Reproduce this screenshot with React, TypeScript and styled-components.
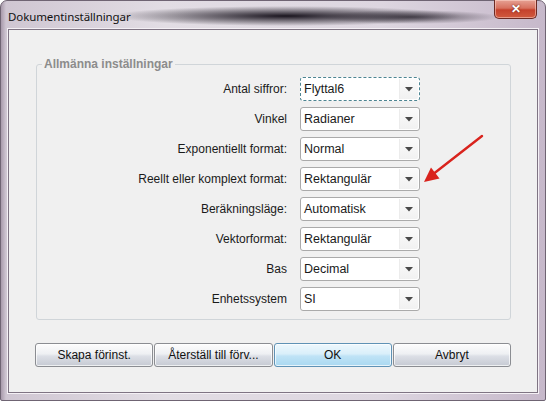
import React from 'react'
import styled, { createGlobalStyle } from 'styled-components'

const settings = [
  { label: 'Antal siffror:', value: 'Flyttal6', focused: true },
  { label: 'Vinkel', value: 'Radianer' },
  { label: 'Exponentiellt format:', value: 'Normal' },
  { label: 'Reellt eller komplext format:', value: 'Rektangulär' },
  { label: 'Beräkningsläge:', value: 'Automatisk' },
  { label: 'Vektorformat:', value: 'Rektangulär' },
  { label: 'Bas', value: 'Decimal' },
  { label: 'Enhetssystem', value: 'SI' },
]

const buttons = [
  { text: 'Skapa förinst.' },
  { text: 'Återställ till förv...' },
  { text: 'OK', primary: true },
  { text: 'Avbryt' },
]

const App = () => {
  return (
    <>
      <GlobalStyle />
      <Window>
        <TitleBar>
          <Title>Dokumentinställningar</Title>
          <CloseButton>✕</CloseButton>
        </TitleBar>

        <Client>
          <GroupBox>
            <Legend>Allmänna inställningar</Legend>
            <Rows>
              {settings.map((s) => (
                <React.Fragment key={s.label}>
                  <Label>{s.label}</Label>
                  <Combo $focused={s.focused}>
                    <ComboText>{s.value}</ComboText>
                    <ComboArrow>
                      <svg width="8" height="5" viewBox="0 0 8 5">
                        <path d="M0 0 L8 0 L4 4.5 Z" fill="#4a4a4a" />
                      </svg>
                    </ComboArrow>
                  </Combo>
                </React.Fragment>
              ))}
            </Rows>
          </GroupBox>

          <ButtonRow>
            {buttons.map((b) => (
              <Button key={b.text} $primary={b.primary}>
                {b.text}
              </Button>
            ))}
          </ButtonRow>
        </Client>

        {/* red annotation arrow drawn over the dialog */}
        <Annotation width="70" height="60" viewBox="420 128 70 60">
          <line x1="482" y1="136" x2="432" y2="175" stroke="#d9231d" strokeWidth="2.4" strokeLinecap="round" />
          <polygon points="424,182 439.5,178.5 431,167.5" fill="#d9231d" />
        </Annotation>
      </Window>
    </>
  )
}

const GlobalStyle = createGlobalStyle`
  html, body {
    margin: 0;
    padding: 0;
    background: #ffffff;
  }
  * {
    box-sizing: border-box;
  }
`

const Window = styled.div`
  position: relative;
  width: 546px;
  height: 401px;
  display: flex;
  flex-direction: column;
  padding: 0 7px 7px 7px;
  border: 1px solid #6f6473;
  border-radius: 7px 7px 2px 2px;
  background:
    radial-gradient(ellipse 175px 10px at 285px 15px, rgba(15, 10, 20, 0.95), rgba(40, 30, 45, 0) 100%),
    radial-gradient(ellipse 90px 7px at 410px 16px, rgba(30, 25, 35, 0.7), rgba(40, 30, 45, 0) 100%),
    linear-gradient(90deg, #a89aab 0px, #cfc6d2 5px, #e2dde4 30%, #ddd6e0 70%, #c6b8ca 100%);
  font-family: 'Liberation Sans', Arial, sans-serif;
`

const TitleBar = styled.div`
  height: 28px;
  display: flex;
  justify-content: space-between;
  align-items: flex-start;
`

const Title = styled.div`
  margin-top: 8px;
  font-family: 'Noto Sans', 'Liberation Sans', sans-serif;
  font-size: 11.5px;
  color: #111;
  letter-spacing: -0.1px;
`

const CloseButton = styled.div`
  width: 43px;
  height: 19px;
  margin-top: -1px;
  margin-right: 1px;
  display: flex;
  align-items: center;
  justify-content: center;
  border: 1px solid #6b2a24;
  border-top: none;
  border-radius: 0 0 5px 5px;
  background: linear-gradient(180deg, #e6a194 0%, #d7715f 45%, #c5412c 55%, #d05a3f 100%);
  box-shadow: inset 0 0 0 1px rgba(255, 220, 210, 0.5);
  color: #ffffff;
  font-size: 12px;
  font-weight: bold;
  text-shadow: 0 0 2px #5a1a10;
`

const Client = styled.div`
  flex: 1;
  display: flex;
  flex-direction: column;
  padding: 27px 26px 0 26px;
  background: #f0f0f0;
  border: 1px solid #7f7483;
  box-shadow: 0 0 0 1px #f4f0f5;
`

const GroupBox = styled.fieldset`
  margin: 0 0 0 1px;
  padding: 6px 0 8px 0;
  border: 1px solid #d0d5d9;
  border-radius: 3px;
  min-width: 0;
`

const Legend = styled.legend`
  margin-left: 5px;
  padding: 0 2px;
  font-size: 12px;
  line-height: 14px;
  font-weight: bold;
  color: #8c8c8c;
`

const Rows = styled.div`
  display: grid;
  grid-template-columns: 250px 120px;
  grid-auto-rows: 24px;
  column-gap: 13px;
  row-gap: 6px;
`

const Label = styled.div`
  display: flex;
  align-items: center;
  justify-content: flex-end;
  font-size: 12px;
  color: #1a1a1a;
`

const Combo = styled.div<{ $focused?: boolean }>`
  display: flex;
  align-items: stretch;
  background: #ffffff;
  border: 1px ${(p) => (p.$focused ? 'dashed #4d8592' : 'solid #aaaaaa')};
  border-radius: 3px;
`

const ComboText = styled.div`
  flex: 1;
  display: flex;
  align-items: center;
  padding-left: 3px;
  font-size: 12.5px;
  color: #1a1a1a;
`

const ComboArrow = styled.div`
  width: 19px;
  margin: 1px;
  display: flex;
  align-items: center;
  justify-content: center;
  border-left: 1px solid #ececec;
  background: linear-gradient(180deg, #fbfbfb, #f1f1f1);
  border-radius: 0 2px 2px 0;
`

const ButtonRow = styled.div`
  display: flex;
  gap: 1px;
  margin-top: 23px;
`

const Button = styled.div<{ $primary?: boolean }>`
  width: 119px;
  height: 24px;
  display: flex;
  align-items: center;
  justify-content: center;
  font-size: 12px;
  color: #111;
  border: 1px solid ${(p) => (p.$primary ? '#5f92b5' : '#8b8d92')};
  border-radius: 3px;
  background: ${(p) =>
    p.$primary
      ? 'linear-gradient(180deg, #eef8fd 0%, #d9effa 45%, #bfe3f6 55%, #a9d8f1 100%)'
      : 'linear-gradient(180deg, #fdfdfd 0%, #eef0f3 45%, #dcdfe6 55%, #c6cad3 100%)'};
  box-shadow: inset 0 0 0 1px rgba(255, 255, 255, 0.7);
`

const Annotation = styled.svg`
  position: absolute;
  left: 419px;
  top: 127px;
  pointer-events: none;
`

export default App
